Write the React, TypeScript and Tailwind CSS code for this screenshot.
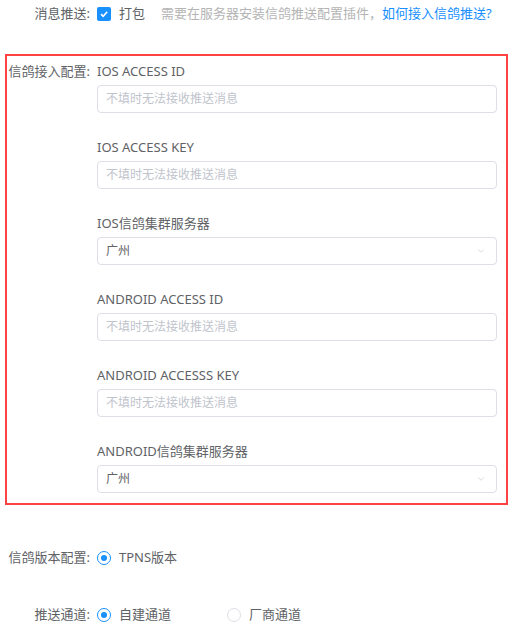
import { ChevronDown } from 'lucide-react';

const font = { fontFamily: '"Noto Sans", "Noto Sans CJK SC", sans-serif' };

function TextField({ label }: { label: string }) {
  return (
    <div className="mb-[24px] last:mb-0">
      <div className="h-[20px] leading-[20px] text-[13px] text-[#606266]">{label}</div>
      <div className="mt-[4px] h-[28px] w-[400px] rounded-[4px] border border-[#dcdfe6] bg-white px-[8px] flex items-center">
        <span className="text-[12px] text-[#c0c4cc]">不填时无法接收推送消息</span>
      </div>
    </div>
  );
}

function SelectField({ label }: { label: string }) {
  return (
    <div className="mb-[24px] last:mb-0">
      <div className="h-[20px] leading-[20px] text-[13px] text-[#606266]">{label}</div>
      <div className="mt-[4px] h-[28px] w-[400px] rounded-[4px] border border-[#dcdfe6] bg-white pl-[8px] pr-[10px] flex items-center justify-between">
        <span className="text-[12px] text-[#606266]">广州</span>
        <ChevronDown size={10} strokeWidth={1.5} className="text-[#c0c4cc]" />
      </div>
    </div>
  );
}

function Radio({ checked, text }: { checked?: boolean; text: string }) {
  return (
    <div className="flex items-center">
      <span
        className={`w-[14px] h-[14px] rounded-full border flex items-center justify-center bg-white ${
          checked ? 'border-[#1890ff]' : 'border-[#dcdfe6]'
        }`}
      >
        {checked && <span className="w-[6px] h-[6px] rounded-full bg-[#1890ff]" />}
      </span>
      <span className="ml-[8px] text-[13px] text-[#606266]">{text}</span>
    </div>
  );
}

export default function App() {
  return (
    <div className="w-[521px] h-[632px] bg-white overflow-hidden" style={font}>
      {/* 消息推送 */}
      <div className="flex items-center h-[28px]">
        <div className="w-[90px] text-right text-[13px] text-[#606266]">消息推送:</div>
        <div className="ml-[7px] flex items-center">
          <span className="w-[14px] h-[14px] rounded-[2px] bg-[#1890ff] flex items-center justify-center">
            <svg width="10" height="10" viewBox="0 0 10 10">
              <path d="M2 5.2 L4.2 7.3 L8.2 2.8" fill="none" stroke="white" strokeWidth="1.6" />
            </svg>
          </span>
          <span className="ml-[8px] text-[13px] text-[#606266]">打包</span>
          <span className="ml-[16px] text-[13px] text-[#b4b4b4]">需要在服务器安装信鸽推送配置插件，</span>
          <span className="text-[13px] text-[#1890ff]">如何接入信鸽推送?</span>
        </div>
      </div>

      {/* 信鸽接入配置 */}
      <div className="mt-[26px] ml-[5px] w-[503px] border-2 border-[#ff4343] pt-[5px] pb-[10px] flex">
        <div className="w-[83px] h-[20px] leading-[20px] text-right text-[13px] text-[#606266]">信鸽接入配置:</div>
        <div className="ml-[7px]">
          <TextField label="IOS ACCESS ID" />
          <TextField label="IOS ACCESS KEY" />
          <SelectField label="IOS信鸽集群服务器" />
          <TextField label="ANDROID ACCESS ID" />
          <TextField label="ANDROID ACCESSS KEY" />
          <SelectField label="ANDROID信鸽集群服务器" />
        </div>
      </div>

      {/* 信鸽版本配置 */}
      <div className="mt-[39px] flex items-center h-[28px]">
        <div className="w-[90px] text-right text-[13px] text-[#606266]">信鸽版本配置:</div>
        <div className="ml-[7px]">
          <Radio checked text="TPNS版本" />
        </div>
      </div>

      {/* 推送通道 */}
      <div className="mt-[29px] flex items-center h-[28px]">
        <div className="w-[90px] text-right text-[13px] text-[#606266]">推送通道:</div>
        <div className="ml-[7px] flex items-center gap-[56px]">
          <Radio checked text="自建通道" />
          <Radio text="厂商通道" />
        </div>
      </div>
    </div>
  );
}
